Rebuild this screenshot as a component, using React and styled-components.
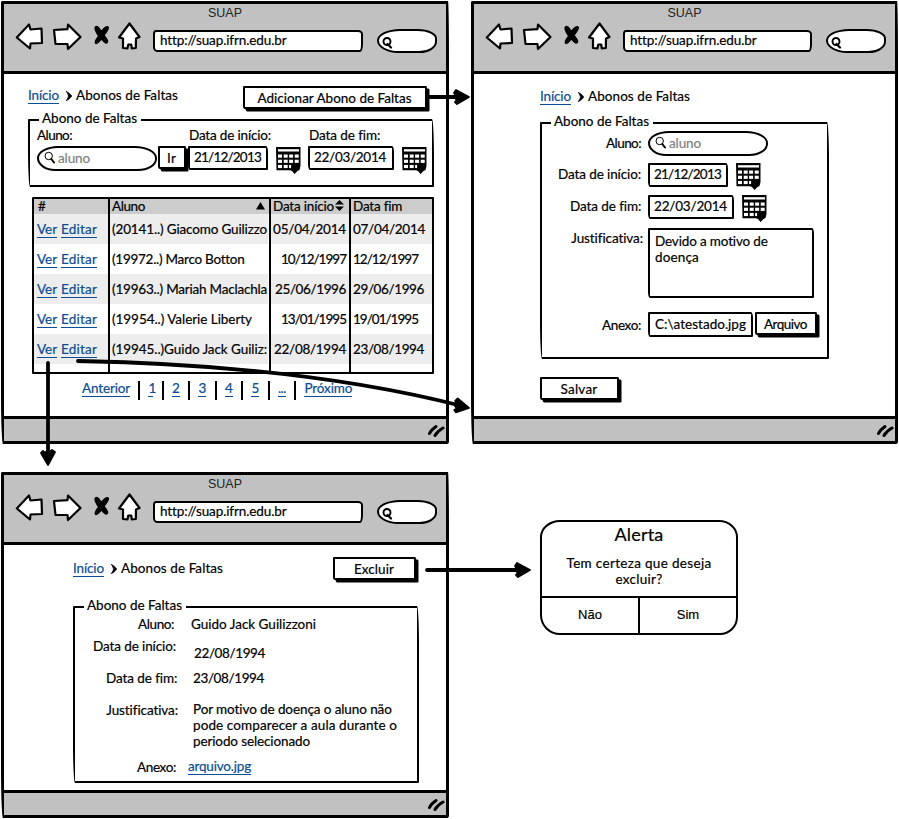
import React, { useLayoutEffect, useRef, useState } from 'react';
import styled, { createGlobalStyle } from 'styled-components';

const INK = '#000';
const LINK = '#0b4c94';
const CHROME = '#c1c1c1';

const GlobalStyle = createGlobalStyle`
  *, *::before, *::after { box-sizing: border-box; }
  body { margin: 0; background: #fff; overflow: hidden; }
`;

const Canvas = styled.main`
  position: relative;
  width: 899px;
  height: 819px;
  padding: 1px 0 0 1px;
  display: grid;
  grid-template-columns: 448px 427px;
  grid-template-rows: 443px 346px;
  column-gap: 22px;
  row-gap: 28px;
  overflow: hidden;
  background: #fff;
  color: ${INK};
  font: 13.5px/16px Lato, 'Open Sans', sans-serif;
  -webkit-text-stroke: 0.2px;
`;

/* ---------- text ---------- */

const TextSpan = styled.span`
  display: inline-block;
  flex: none;
  white-space: pre;
  height: ${(p) => (p.$link ? 17 : 16)}px;
  color: ${(p) => (p.$link ? LINK : p.$muted ? '#808080' : 'inherit')};
  border-bottom: ${(p) => (p.$link ? `1px solid ${LINK}` : '0')};
  margin: ${(p) => p.$m || 0};
`;

/* Spreads its letters so that the text takes exactly the given width. */
function Text({ w, children, ...rest }) {
  const ref = useRef(null);
  const [spacing, setSpacing] = useState(0);
  useLayoutEffect(() => {
    if (!w) return;
    const range = document.createRange();
    range.selectNodeContents(ref.current);
    const natural = range.getBoundingClientRect().width;
    setSpacing((w - natural) / String(children).length);
  }, []);
  const style = w ? { letterSpacing: `${spacing}px`, width: w } : undefined;
  return (
    <TextSpan ref={ref} style={style} {...rest}>
      {children}
    </TextSpan>
  );
}

/* ---------- window ---------- */

const Frame = styled.section`
  display: flex;
  flex-direction: column;
  border: 3px solid ${INK};
  border-radius: 2px 1px 2px 2px / 1px 60px 3px 50px;
  overflow: hidden;
`;

const Header = styled.header`
  flex: none;
  height: 70px;
  padding-top: 1px;
  background: ${CHROME};
  border-bottom: 3px solid ${INK};
`;

const Title = styled.h1`
  margin: 0;
  text-align: center;
  font: 12.5px/16px 'Liberation Sans', Arial, sans-serif;
  -webkit-text-stroke: 0;
  color: #222;
`;

const Toolbar = styled.div`
  display: flex;
  padding: 1px 9px 0 12px;
  height: 36px;
`;

const ToolIcon = styled.svg`
  display: block;
  flex: none;
  overflow: visible;
  margin-right: ${(p) => p.$gap}px;
`;

const UrlBar = styled.div`
  flex: 1;
  height: 22px;
  margin-top: 8px;
  padding: 0 0 0 5px;
  border: 2px solid ${INK};
  border-radius: 3px 5px 3px 4px / 4px 4px 8px 5px;
  background: #fff;
`;

const QuickSearch = styled.div`
  width: 60px;
  height: 24px;
  margin: 7px 0 0 14px;
  padding: 5px 0 0 3px;
  border: 2px solid ${INK};
  border-radius: 24px 20px 18px 22px / 12px 10px 12px 13px;
  background: #fff;
`;

const Body = styled.div`
  flex: 1;
  min-height: 0;
  padding: ${(p) => p.$pad};
  background: #fff;
`;

const Footer = styled.footer`
  flex: none;
  height: 25px;
  display: flex;
  justify-content: flex-end;
  padding: 4px 1px 0 0;
  background: ${CHROME};
  border-top: 3px solid ${INK};
`;

function BrowserWindow({ pad, children }) {
  return (
    <Frame>
      <Header>
        <Title>SUAP</Title>
        <Toolbar>
          <ToolIcon width="28" height="28" viewBox="0 0 28 28" $gap={9}>
            <path d="M0.800 15.500 L13 2.500 L14.500 7.500 L25.500 6.500 L26 21 L14.500 21.500 L14 26.500 Z" fill="#fff" stroke={INK} strokeWidth="2.200" strokeLinejoin="round" />
          </ToolIcon>
          <ToolIcon width="29" height="28" viewBox="0 0 29 28" $gap={11}>
            <path d="M1 8 L14.500 7.200 L15 2.500 L27.500 15 L15 27 L14.500 22 L2.500 22 Z" fill="#fff" stroke={INK} strokeWidth="2.200" strokeLinejoin="round" />
          </ToolIcon>
          <ToolIcon width="17" height="28" viewBox="0 0 17 28" $gap={8}>
            <path d="M2.500 4.800 Q4.500 3 8.300 9.500 Q12.500 4 15 4.800 Q16.800 6 11 13.500 Q15.500 18.500 14.500 20.500 Q13 22.500 8.500 17 Q5 21.500 3 21.700 Q0.500 20.500 5.500 14 Q0.500 6.500 2.500 4.800 Z" fill={INK} stroke={INK} strokeWidth="1.200" strokeLinejoin="round" />
          </ToolIcon>
          <ToolIcon width="23" height="28" viewBox="0 0 23 28" $gap={12}>
            <path d="M11.500 1.500 L21.500 15 L18 16.500 L17.800 26 L13.800 26.300 L13.200 22.500 L10.300 22.500 L9.500 26.300 L5 26 L5 16.500 L1 15.500 Z" fill="#fff" stroke={INK} strokeWidth="2.200" strokeLinejoin="round" />
          </ToolIcon>
          <UrlBar>
            <Text w={126}>http://suap.ifrn.edu.br</Text>
          </UrlBar>
          <QuickSearch>
            <svg width="11" height="12" viewBox="0 0 11 12">
              <circle cx="5" cy="4.500" r="3.500" fill="none" stroke={INK} strokeWidth="1.900" />
              <path d="M5.500 7 L9 10.500" stroke={INK} strokeWidth="2.200" strokeLinecap="round" />
            </svg>
          </QuickSearch>
        </Toolbar>
      </Header>
      <Body $pad={pad}>{children}</Body>
      <Footer>
        <svg width="18" height="16" viewBox="0 0 18 16">
          <path d="M2.500 10.500 Q4 7 9 3.500 M8 12.500 Q10.500 8 16 5" fill="none" stroke={INK} strokeWidth="3" strokeLinecap="round" />
        </svg>
      </Footer>
    </Frame>
  );
}

/* ---------- shared parts ---------- */

const Row = styled.div`
  display: flex;
  align-items: flex-start;
  height: ${(p) => p.$h}px;
  margin-top: ${(p) => p.$mt || 0}px;
`;

const Crumbs = styled.nav`
  display: flex;
  margin-top: ${(p) => p.$mt || 0}px;
  flex: 1;
`;

const Chevron = styled.svg`
  width: 7px;
  height: 10px;
  margin: 4px 4px 0 6px;
`;

function Breadcrumb({ mt }) {
  return (
    <Crumbs $mt={mt}>
      <Text w={31} $link>Início</Text>
      <Chevron viewBox="0 0 7 10">
        <path d="M1 0 Q5 2 7 5 Q4 9 1 10 Q3 7 3.500 5 Q2.500 2 1 0 Z" fill={INK} stroke={INK} strokeWidth=".5" />
      </Chevron>
      <Text w={102}>Abonos de Faltas</Text>
    </Crumbs>
  );
}

const Button = styled.button`
  flex: none;
  display: block;
  width: ${(p) => p.$w}px;
  height: 23px;
  margin: ${(p) => p.$m || 0};
  padding: 1px 1px 0 0;
  border: 2px solid ${INK};
  border-radius: 1px 1px 1px 2px / 1px 2px 1px 3px;
  background: #fff;
  box-shadow: 2.5px 2.5px 0 ${INK};
  color: inherit;
  font: inherit;
  text-align: center;
`;

const Group = styled.fieldset`
  width: ${(p) => p.$w}px;
  height: ${(p) => p.$h}px;
  min-width: 0;
  margin: ${(p) => p.$mt || 0}px 0 0;
  padding: 0 0 0 7px;
  border: 2.5px solid ${INK};
  border-radius: 1px 2px 1px 2px / 1px 40px 1px 40px;
`;

const Legend = styled.legend`
  height: 16px;
  margin-left: 2px;
  padding: 0 4px 0 3px;
  line-height: 13px;
`;

function FieldGroup({ children, ...rest }) {
  return (
    <Group {...rest}>
      <Legend>
        <Text w={95}>Abono de Faltas</Text>
      </Legend>
      {children}
    </Group>
  );
}

const Input = styled.div`
  flex: none;
  width: ${(p) => p.$w}px;
  height: ${(p) => p.$h || 24}px;
  margin: ${(p) => p.$m || 0};
  padding: 1px 0 0 4px;
  border: 2.5px solid ${INK};
  border-radius: 1px 2px 1px 2px / 1px 6px 1px 6px;
  background: #fff;
`;

const SearchBox = styled.div`
  flex: none;
  display: flex;
  width: 120px;
  height: 25px;
  padding: 2px 0 0 5px;
  border: 2.2px solid ${INK};
  border-radius: 21px 22px 19px 18px / 12px 12px 12px 13px;
  background: #fff;
`;

function StudentSearch() {
  return (
    <SearchBox>
      <svg width="13" height="15" viewBox="0 0 13 15">
        <circle cx="4.700" cy="6" r="3.700" fill="none" stroke={INK} strokeWidth="1" />
        <path d="M7.300 9 L10 12.500" stroke={INK} strokeWidth="2" strokeLinecap="round" />
      </svg>
      <Text w={32} $muted $m="0 0 0 1px">aluno</Text>
    </SearchBox>
  );
}

const CalendarSvg = styled.svg`
  flex: none;
  width: 25px;
  height: 27px;
  margin-left: 8px;
`;

function Calendar() {
  const rows = [7.5, 12.7, 17.9];
  const cols = [2, 7.7, 13.1, 18.7];
  return (
    <CalendarSvg viewBox="0 0 25 27">
      <path d="M0 0 H24.500 V19 L23.500 23 L21.500 24 L18.500 27 L16 24 L14 23.200 H0.500 Z" fill={INK} />
      <rect x="2" y="2.200" width="21" height="2.300" fill="#fff" />
      {rows.map((y, r) =>
        cols.map((x, c) =>
          r === 2 && c === 3 ? null : (
            <rect key={`${r}-${c}`} x={x} y={y} width={r === 2 && c === 2 ? 2 : 4} height="3.200" fill="#fff" />
          )
        )
      )}
    </CalendarSvg>
  );
}

/* ---------- list window ---------- */

const Cell = styled.div`
  flex: none;
  width: ${(p) => p.$w}px;
`;

const Grid = styled.div`
  width: 402px;
  height: 177px;
  margin: 10px 0 0 4px;
  border: 2.5px solid ${INK};
  border-radius: 1px;
  display: grid;
  grid-template-columns: 76px 161px 80px 1fr;
`;

const Column = styled.div`
  min-width: 0;
  overflow: hidden;
  border-right: ${(p) => (p.$last ? '0' : `2px solid ${INK}`)};
`;

const HeadCell = styled.div`
  display: flex;
  height: 15px;
  padding-left: 2px;
  background: #ccc;
  line-height: 15px;
`;

const BodyCell = styled.div`
  display: flex;
  justify-content: ${(p) => (p.$right ? 'flex-end' : 'flex-start')};
  height: 30px;
  margin-right: ${(p) => (p.$clip ? 1 : 0)}px;
  padding: 7px ${(p) => (p.$right ? 3 : 0)}px 0 2px;
  overflow: hidden;
  background: ${(p) => (p.$shaded ? '#ededed' : '#fff')};
`;

const SortMark = styled.svg`
  width: 11px;
  height: 13px;
  margin: 0 0 0 ${(p) => p.$ml}px;
`;

const Pager = styled.nav`
  display: flex;
  margin: 6px 0 0 54px;
`;

const Bar = styled.i`
  width: 2px;
  height: 19px;
  margin: 1px ${(p) => p.$r}px 0 ${(p) => p.$l}px;
  background: ${INK};
`;

const records = [
  { name: '(20141..) Giacomo Guilizzo', nameW: 155, start: '05/04/2014', startW: 73, end: '07/04/2014', endW: 72 },
  { name: '(19972..) Marco Botton', nameW: 132, start: '10/12/1997', startW: 65, end: '12/12/1997', endW: 65 },
  { name: '(19963..) Mariah Maclachla', nameW: 155, start: '25/06/1996', startW: 71, end: '29/06/1996', endW: 71 },
  { name: '(19954..) Valerie Liberty', nameW: 140, start: '13/01/1995', startW: 65, end: '19/01/1995', endW: 65 },
  { name: '(19945..)Guido Jack Guiliz:', nameW: 155, start: '22/08/1994', startW: 72, end: '23/08/1994', endW: 71 },
];

function RecordTable() {
  return (
    <Grid>
      <Column>
        <HeadCell><Text $m="0 0 0 2px">#</Text></HeadCell>
        {records.map((r, i) => (
          <BodyCell key={r.name} $shaded={i % 2 === 0}>
            <Text w={20} $link $m="0 4px 0 1px">Ver</Text>
            <Text w={36} $link>Editar</Text>
          </BodyCell>
        ))}
      </Column>
      <Column>
        <HeadCell>
          <Text w={33}>Aluno</Text>
          <SortMark $ml={110} viewBox="0 0 11 13"><path d="M5.500 3 L10 10.500 H1 Z" fill={INK} /></SortMark>
        </HeadCell>
        {records.map((r, i) => (
          <BodyCell key={r.name} $shaded={i % 2 === 0} $clip>
            <Text w={r.nameW}>{r.name}</Text>
          </BodyCell>
        ))}
      </Column>
      <Column>
        <HeadCell>
          <Text w={61}>Data início</Text>
          <SortMark $ml={0} viewBox="0 0 11 13"><path d="M5.500 1 L10 5.500 H1 Z M5.500 12 L10 7.500 H1 Z" fill={INK} /></SortMark>
        </HeadCell>
        {records.map((r, i) => (
          <BodyCell key={r.name} $shaded={i % 2 === 0} $right>
            <Text w={r.startW}>{r.start}</Text>
          </BodyCell>
        ))}
      </Column>
      <Column $last>
        <HeadCell><Text w={49}>Data fim</Text></HeadCell>
        {records.map((r, i) => (
          <BodyCell key={r.name} $shaded={i % 2 === 0}>
            <Text w={r.endW}>{r.end}</Text>
          </BodyCell>
        ))}
      </Column>
    </Grid>
  );
}

const pages = [
  { label: 'Anterior', w: 48 },
  { label: '1', w: 5 },
  { label: '2', w: 8 },
  { label: '3', w: 8 },
  { label: '4', w: 8 },
  { label: '5', w: 8 },
  { label: '...', w: 8 },
  { label: 'Próximo', w: 48 },
];

function ListWindow() {
  return (
    <BrowserWindow pad="12px 0 0 24px">
      <Row $h={26}>
        <Breadcrumb mt={1} />
        <Button $w={184} $m="0 19px 0 0"><Text w={154}>Adicionar Abono de Faltas</Text></Button>
      </Row>
      <FieldGroup $w={406} $h={75}>
        <Row $h={19} $mt={-1}>
          <Cell $w={152}><Text w={35}>Aluno:</Text></Cell>
          <Cell $w={120}><Text w={82}>Data de início:</Text></Cell>
          <Text w={71}>Data de fim:</Text>
        </Row>
        <Row $h={28}>
          <StudentSearch />
          <Button $w={28} $m="0 2px 0 1px"><Text w={9}>Ir</Text></Button>
          <Input $w={80} $m="0"><Text w={67}>21/12/2013</Text></Input>
          <Row $h={27} $mt={1}><Calendar /></Row>
          <Input $w={86} $m="0 0 0 7px"><Text w={72}>22/03/2014</Text></Input>
          <Row $h={27} $mt={1}><Calendar /></Row>
        </Row>
      </FieldGroup>
      <RecordTable />
      <Pager>
        {pages.map((p, i) => (
          <React.Fragment key={p.label}>
            {i > 0 && <Bar $l={8.2} $r={8.3} />}
            <Text w={p.w} $link $m="0">{p.label}</Text>
          </React.Fragment>
        ))}
      </Pager>
    </BrowserWindow>
  );
}

/* ---------- edit window ---------- */

const LabelCell = styled.div`
  flex: none;
  width: ${(p) => p.$w}px;
  margin-right: ${(p) => p.$gap}px;
  padding-top: ${(p) => p.$pt || 0}px;
  text-align: right;
`;

function EditWindow() {
  return (
    <BrowserWindow pad="14px 0 0 66px">
      <Breadcrumb />
      <FieldGroup $w={289} $h={244} $mt={10}>
        <Row $h={32}>
          <LabelCell $w={92} $gap={7} $pt={4}><Text w={35}>Aluno:</Text></LabelCell>
          <StudentSearch />
        </Row>
        <Row $h={32}>
          <LabelCell $w={92} $gap={7} $pt={3}><Text w={83}>Data de início:</Text></LabelCell>
          <Input $w={80}><Text w={67}>21/12/2013</Text></Input>
          <Calendar />
        </Row>
        <Row $h={33}>
          <LabelCell $w={92} $gap={7} $pt={3}><Text w={71}>Data de fim:</Text></LabelCell>
          <Input $w={86}><Text w={73}>22/03/2014</Text></Input>
          <Calendar />
        </Row>
        <Row $h={84}>
          <LabelCell $w={94} $gap={5} $pt={2}><Text w={72}>Justificativa:</Text></LabelCell>
          <Input $w={166} $h={70}>
            <Text w={113} $m="2px 0 0 1px">Devido a motivo de</Text>
            <Text w={44} $m="0 0 0 1px">doença</Text>
          </Input>
        </Row>
        <Row $h={26}>
          <LabelCell $w={92} $gap={7} $pt={5}><Text w={39}>Anexo:</Text></LabelCell>
          <Input $w={105} $h={25}><Text w={91} $m="1px 0 0 1px">C:\atestado.jpg</Text></Input>
          <Button $w={62} $m="0 0 0 2px"><Text w={43}>Arquivo</Text></Button>
        </Row>
      </FieldGroup>
      <Button $w={79} $m="18px 0 0"><Text w={37}>Salvar</Text></Button>
    </BrowserWindow>
  );
}

/* ---------- detail window ---------- */

const Paragraph = styled.div`
  display: flex;
  flex-direction: column;
  align-items: flex-start;
`;

function DetailWindow() {
  return (
    <BrowserWindow pad="12px 0 0 69px">
      <Row $h={42}>
        <Breadcrumb mt={3} />
        <Button $w={83} $m="0 30px 0 0"><Text w={40}>Excluir</Text></Button>
      </Row>
      <FieldGroup $w={346} $h={184}>
        <Row $h={22} $mt={1}>
          <LabelCell $w={92} $gap={17}><Text w={36}>Aluno:</Text></LabelCell>
          <Text w={125}>Guido Jack Guilizzoni</Text>
        </Row>
        <Row $h={32}>
          <LabelCell $w={94} $gap={18}><Text w={83}>Data de início:</Text></LabelCell>
          <Text w={71} $m="7px 0 0">22/08/1994</Text>
        </Row>
        <Row $h={31}>
          <LabelCell $w={95} $gap={16}><Text w={71}>Data de fim:</Text></LabelCell>
          <Text w={71}>23/08/1994</Text>
        </Row>
        <Row $h={57}>
          <LabelCell $w={96} $gap={15} $pt={1}><Text w={72}>Justificativa:</Text></LabelCell>
          <Paragraph>
            <Text w={199}>Por motivo de doença o aluno não</Text>
            <Text w={204}>pode comparecer a aula durante o</Text>
            <Text w={117}>periodo selecionado</Text>
          </Paragraph>
        </Row>
        <Row $h={18}>
          <LabelCell $w={94} $gap={12} $pt={1}><Text w={39}>Anexo:</Text></LabelCell>
          <Text w={63} $link>arquivo.jpg</Text>
        </Row>
      </FieldGroup>
    </BrowserWindow>
  );
}

/* ---------- alert ---------- */

const AlertBox = styled.section`
  width: 198px;
  height: 115px;
  margin: 48px 0 0 69px;
  border: 2px solid ${INK};
  border-radius: 20px 19px 18px 20px / 17px 17px 18px 20px;
  display: flex;
  flex-direction: column;
  align-items: center;
  overflow: hidden;
`;

const AlertTitle = styled.h2`
  height: 33px;
  margin: 0;
  padding-top: 2px;
  font: 18px/20px Lato, sans-serif;
`;

const AlertActions = styled.div`
  display: grid;
  grid-template-columns: 96px 1fr;
  align-self: stretch;
  flex: 1;
  margin-top: 9px;
  border-top: 2px solid ${INK};
`;

const AlertAction = styled.div`
  padding: 9px 0 0;
  text-align: center;
  font: 13px/16px 'Liberation Sans', Arial, sans-serif;
  border-left: ${(p) => (p.$divided ? `2.5px solid ${INK}` : '0')};
`;

/* ---------- flow arrows ---------- */

const Flow = styled.svg`
  position: absolute;
  inset: 0;
  pointer-events: none;
`;

const HEAD = 'M0 0 L-13 -7 L-15 -4 L-13 -1 L-14 1 L-12 3 L-14 5 L-12 7 Z';

function FlowArrows() {
  return (
    <Flow width="899" height="819" viewBox="0 0 899 819">
      <g fill="none" stroke={INK} strokeWidth="3.800" strokeLinecap="round">
        <path d="M430 97 H464" />
        <path d="M48 363 V456" />
        <path d="M78 361 C238 364 360 380 462 406" />
        <path d="M427 570 H522" />
      </g>
      <g fill={INK} stroke={INK} strokeWidth="1.800" strokeLinejoin="round">
        <path d={HEAD} transform="translate(469 97)" />
        <path d={HEAD} transform="translate(48 465) rotate(90)" />
        <path d={HEAD} transform="translate(469 408) rotate(12)" />
        <path d={HEAD} transform="translate(530 570)" />
      </g>
    </Flow>
  );
}

export default function App() {
  return (
    <>
      <GlobalStyle />
      <Canvas>
        <ListWindow />
        <EditWindow />
        <DetailWindow />
        <AlertBox>
          <AlertTitle><Text w={49}>Alerta</Text></AlertTitle>
          <Text w={145}>Tem certeza que deseja</Text>
          <Text w={47}>excluir?</Text>
          <AlertActions>
            <AlertAction>Não</AlertAction>
            <AlertAction $divided>Sim</AlertAction>
          </AlertActions>
        </AlertBox>
        <FlowArrows />
      </Canvas>
    </>
  );
}
